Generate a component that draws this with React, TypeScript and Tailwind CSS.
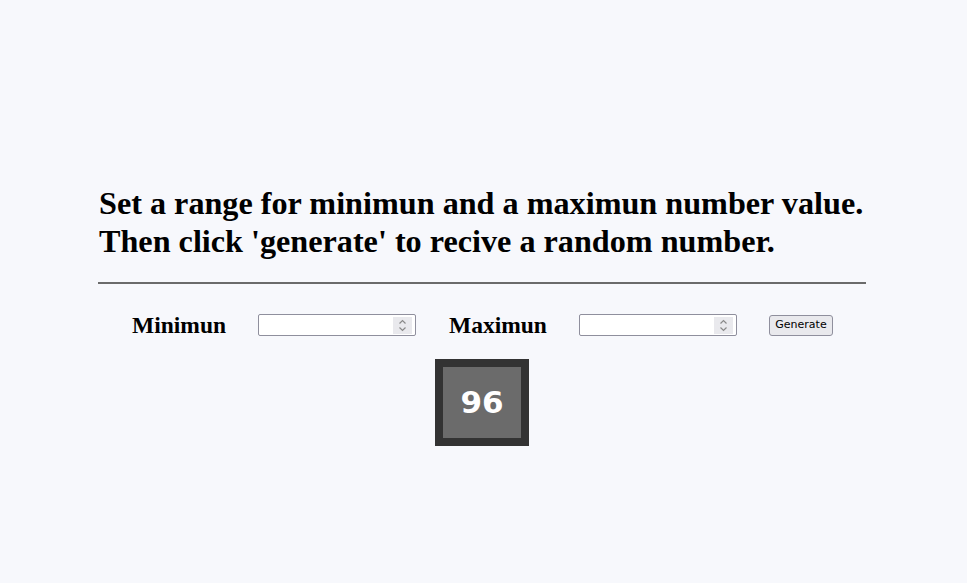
function NumberField() {
  return (
    <div className="flex h-[22px] w-[158px] items-center rounded-[2px] border border-[#8f8f9d] bg-white pr-[3px]">
      <input
        type="number"
        className="h-full min-w-0 flex-1 bg-transparent px-1 font-['DejaVu_Sans',sans-serif] text-[13px] outline-none [appearance:textfield] [&::-webkit-inner-spin-button]:appearance-none"
      />
      <span className="flex h-[17px] w-[19px] flex-col items-center justify-center bg-[#e9e9ed]">
        <svg width="9" height="13" viewBox="0 0 9 13" fill="none" stroke="#8a8a8a" strokeWidth="1.2">
          <path d="M1.5 4.5 4.5 1.5 7.5 4.5" />
          <path d="M1.5 8.5 4.5 11.5 7.5 8.5" />
        </svg>
      </span>
    </div>
  );
}

export default function App() {
  return (
    <div className="min-h-screen bg-[#f7f8fc] font-['Liberation_Serif',serif] text-black">
      <div className="ml-[98px] w-[768px] pt-[184px]">
        <h1 className="pl-px text-[32.2px] font-bold leading-[38px]">
          Set a range for minimun and a maximun number value.
          <br />
          Then click 'generate' to recive a random number.
        </h1>
        <hr className="mt-[22px] border-0 border-t-2 border-[#6b6b6b]" />

        <div className="mt-[30px] flex h-[22px] items-center">
          <label className="ml-[34px] w-[126px] text-[23.5px] font-bold leading-[22px]">Minimun</label>
          <NumberField />
          <label className="ml-[33px] w-[130px] text-[23.5px] font-bold leading-[22px]">Maximun</label>
          <NumberField />
          <button className="ml-[32px] h-[21px] w-[64px] rounded-[3px] border border-[#8f8f9d] bg-[#e9e9ed] font-['DejaVu_Sans',sans-serif] text-[11px] text-black">
            Generate
          </button>
        </div>

        <div className="mt-[23px] flex justify-center">
          <div className="flex h-[87px] w-[94px] items-center justify-center border-[8px] border-[#333333] bg-[#6b6b6b]">
            <span className="font-['DejaVu_Sans',sans-serif] text-[31px] font-bold text-white">96</span>
          </div>
        </div>
      </div>
    </div>
  );
}
